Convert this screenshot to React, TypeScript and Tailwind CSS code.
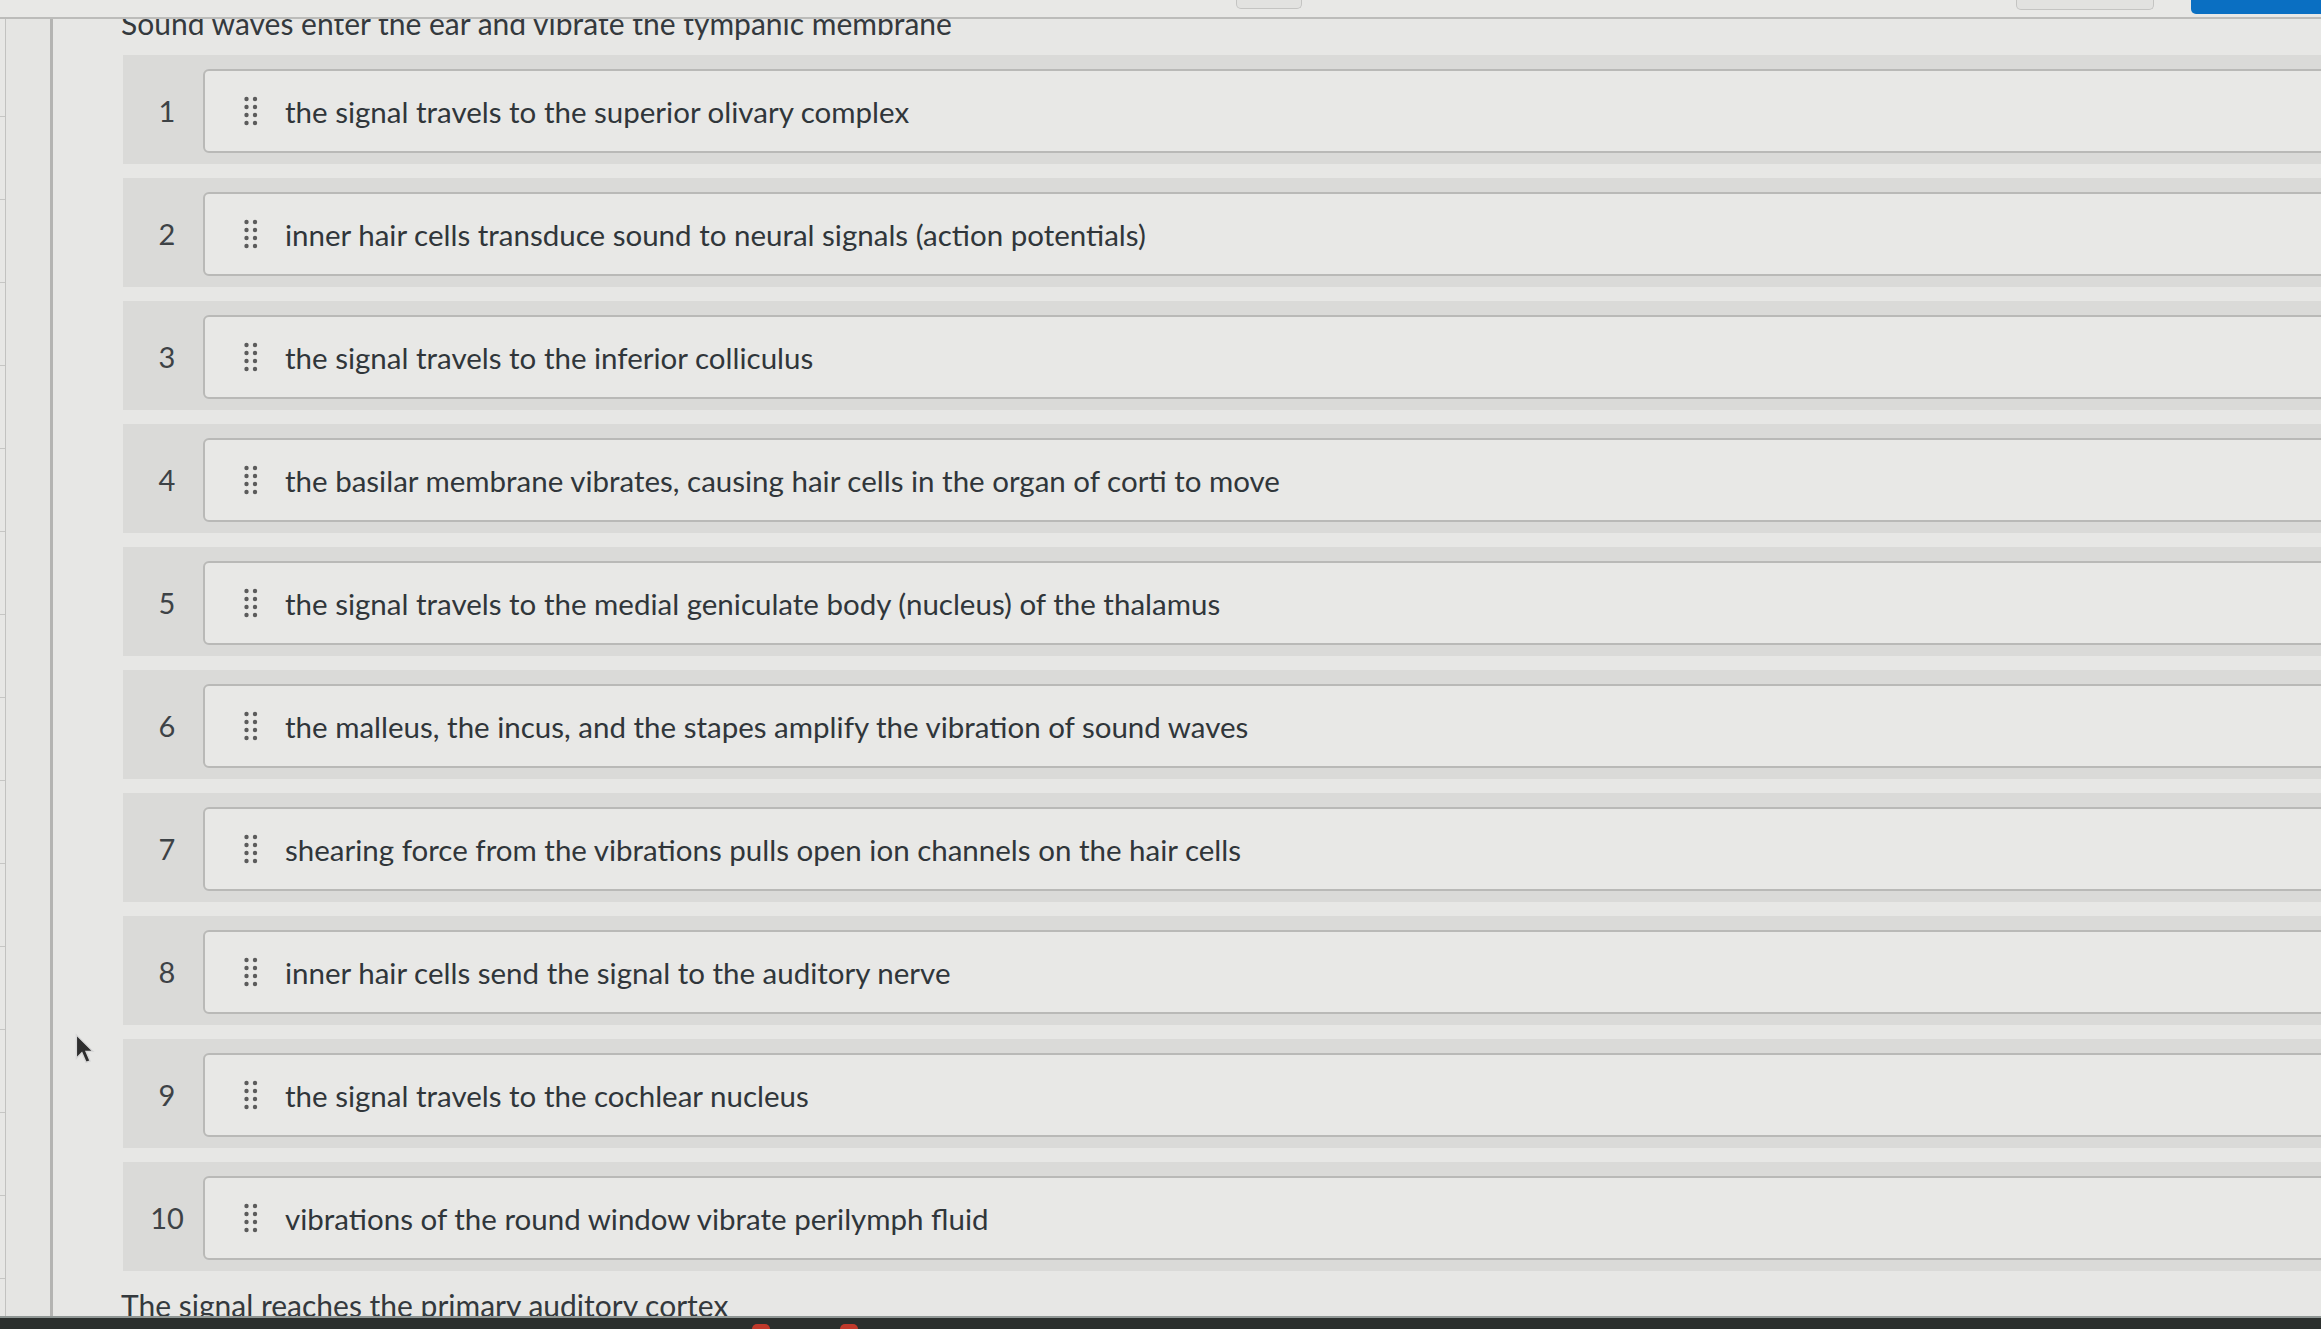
import React from "react";

const items = [
  "the signal travels to the superior olivary complex",
  "inner hair cells transduce sound to neural signals (action potentials)",
  "the signal travels to the inferior colliculus",
  "the basilar membrane vibrates, causing hair cells in the organ of corti to move",
  "the signal travels to the medial geniculate body (nucleus) of the thalamus",
  "the malleus, the incus, and the stapes amplify the vibration of sound waves",
  "shearing force from the vibrations pulls open ion channels on the hair cells",
  "inner hair cells send the signal to the auditory nerve",
  "the signal travels to the cochlear nucleus",
  "vibrations of the round window vibrate perilymph fluid",
];

function Handle() {
  return (
    <svg width="16" height="30" viewBox="0 0 16 30" className="shrink-0">
      {[3, 11, 19, 27].map((y) => (
        <g key={y} fill="#5b5b5b">
          <circle cx="3.5" cy={y} r="2.2" />
          <circle cx="12" cy={y} r="2.2" />
        </g>
      ))}
    </svg>
  );
}

export default function App() {
  return (
    <div className="w-[2321px] h-[1329px] flex flex-col overflow-hidden bg-[#e7e7e5] font-['Lato','Noto_Sans',sans-serif] relative">
      {/* header */}
      <div className="h-[19px] shrink-0 border-b-2 border-[#bcbcba] bg-[#e8e8e6] flex items-start">
        <div className="ml-[1236px] w-[66px] h-[9px] rounded-b-[5px] border border-t-0 border-[#c4c4c2] bg-[#e2e2e0]" />
        <div className="ml-[714px] w-[138px] h-[10px] rounded-b-[5px] border border-t-0 border-[#c4c4c2] bg-[#e2e2e0]" />
        <div className="ml-[37px] flex-1 h-[14px] rounded-bl-[5px] bg-[#0a6fc2]" />
      </div>

      {/* body */}
      <div className="flex-1 flex min-h-0">
        <div className="w-[6px] shrink-0 border-r border-[#c2c2c0] flex flex-col">
          <div className="h-[98px] border-b border-[#c6c6c4]" />
          {Array.from({ length: 14 }).map((_, i) => (
            <div key={i} className="h-[83px] shrink-0 border-b border-[#c6c6c4]" />
          ))}
        </div>
        <div className="w-[47px] shrink-0 border-r-[3px] border-[#b4b4b2] bg-[#e5e5e3]" />
        <div className="flex-1 min-w-0 overflow-hidden pl-[68px]">
          <div className="-mt-[14px] mb-[14px] text-[30px] leading-[36px] text-[#34393d] whitespace-nowrap">
            Sound waves enter the ear and vibrate the tympanic membrane
          </div>
          <div className="flex flex-col gap-[14px] w-[2240px]">
            {items.map((t, i) => (
              <div key={i} className="h-[109px] bg-[#dadad8] flex items-start ml-[2px]">
                <div className="w-[80px] h-[84px] mt-[14px] flex items-center justify-center pl-[8px] text-[29px] text-[#3d4246]">
                  {i + 1}
                </div>
                <div className="flex-1 h-[84px] mt-[14px] rounded-[6px] border-2 border-[#b9b9b7] bg-[#e8e8e6] flex items-center pl-[38px]">
                  <Handle />
                  <span className="ml-[26px] mt-[3px] text-[29.5px] text-[#30363a] whitespace-nowrap">{t}</span>
                </div>
              </div>
            ))}
          </div>
          <div className="mt-[16px] text-[30px] leading-[36px] text-[#34393d] whitespace-nowrap">
            The signal reaches the primary auditory cortex
          </div>
        </div>
      </div>

      {/* bottom bar */}
      <div className="h-[13px] shrink-0 bg-[#2b2f2d] border-t-2 border-[#8f9694] flex items-end">
        <div className="ml-[752px] w-[18px] h-[5px] rounded-t-full bg-[#c0392b]" />
        <div className="ml-[70px] w-[18px] h-[5px] rounded-t-full bg-[#c0392b]" />
      </div>

      {/* mouse cursor */}
      <svg className="absolute left-[75px] top-[1033px]" width="22" height="34" viewBox="0 0 16 24">
        <path d="M1 1 L1 18 L5 14 L8 21 L11 20 L8 13 L13 13 Z" fill="#2e2e2e" stroke="#d8d8d8" strokeWidth="1" />
      </svg>
    </div>
  );
}
